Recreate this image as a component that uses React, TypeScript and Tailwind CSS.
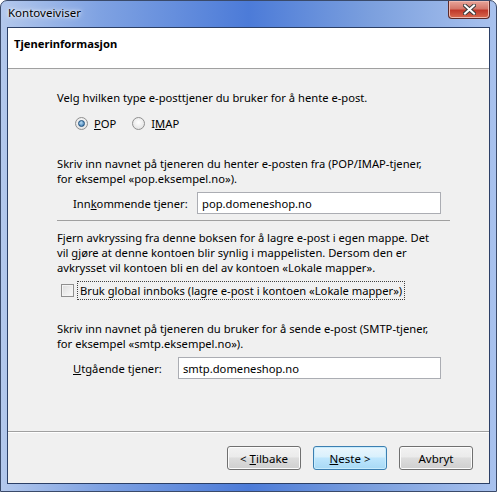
const font = "font-['Noto_Sans','Open_Sans',sans-serif]";

function Radio({ checked }: { checked?: boolean }) {
  return (
    <span className="flex h-[13px] w-[13px] items-center justify-center rounded-full border border-[#8f8f8f] bg-[radial-gradient(circle_at_50%_40%,#ffffff,#dcdcdc)]">
      {checked && (
        <span className="h-[7px] w-[7px] rounded-full border border-[#1b4d7a] bg-[radial-gradient(circle_at_40%_35%,#b7dcf5,#2a6aa6)]" />
      )}
    </span>
  );
}

function Button({ children, primary }: { children: React.ReactNode; primary?: boolean }) {
  return (
    <div
      className={`flex h-[24px] w-[74px] items-center justify-center rounded-[3px] border text-[11.5px] text-black ${
        primary
          ? "border-[#3c7fb1] bg-[linear-gradient(#eaf6fd_0%,#d9f0fc_45%,#bee6fd_50%,#a7d9f5_100%)] shadow-[inset_0_0_0_1px_#c8ecfd]"
          : "border-[#707070] bg-[linear-gradient(#f2f2f2_0%,#ebebeb_45%,#dddddd_50%,#cfcfcf_100%)] shadow-[inset_0_0_0_1px_#fcfcfc]"
      }`}
    >
      {children}
    </div>
  );
}

export default function App() {
  return (
    <div className={`${font} h-[492px] w-[497px] overflow-hidden bg-white`}>
      <div className="relative flex h-[492px] w-[497px] flex-col rounded-t-[7px] border border-[#3a4a6a] bg-[linear-gradient(90deg,#b3c8ec_0%,#7fa2e2_20%,#4c7bd8_50%,#7ca0de_75%,#a9c2ee_100%)]">
        {/* title bar */}
        <div className="flex h-[26px] shrink-0 items-start">
          <span className="ml-[7px] mt-[4px] text-[11.5px] leading-[16px] text-black [text-shadow:0_0_6px_#ffffff,0_0_3px_#ffffff]">
            Kontoveiviser
          </span>
          <div className="ml-auto mr-[6px] flex h-[18px] w-[42px] items-center justify-center rounded-b-[4px] border border-t-0 border-[#5a2a2a] bg-[linear-gradient(#e8a59a_0%,#d4776a_45%,#c0392b_55%,#d86a50_100%)] shadow-[inset_0_0_0_1px_#f0b8ae]">
            <svg width="13" height="11" viewBox="0 0 13 11">
              <path d="M2 1.5 L11 9.5 M11 1.5 L2 9.5" stroke="#3b3b3b" strokeWidth="4" strokeLinecap="square" />
              <path d="M2 1.5 L11 9.5 M11 1.5 L2 9.5" stroke="#ffffff" strokeWidth="2" strokeLinecap="square" />
            </svg>
          </div>
        </div>

        {/* client area */}
        <div className="mx-[6px] flex h-[457px] flex-col border border-[#2b3f66] bg-[#f0f0f0] text-[11.2px] leading-[15px] text-black whitespace-nowrap">
          <div className="h-[41px] shrink-0 border-b border-[#a0a0a0] bg-white pl-[6px] pt-[8px]">
            <span className="text-[11.2px] font-bold">Tjenerinformasjon</span>
          </div>

          <div className="flex flex-1 flex-col pl-[49px] pr-[43px]">
            <p className="mt-[21px]">Velg hvilken type e-posttjener du bruker for å hente e-post.</p>

            <div className="mt-[11px] flex items-center pl-[18px]">
              <Radio checked />
              <span className="ml-[6px]">
                <u>P</u>OP
              </span>
              <span className="ml-[16px]">
                <Radio />
              </span>
              <span className="ml-[6px]">
                I<u>M</u>AP
              </span>
            </div>

            <p className="mt-[25px]">
              Skriv inn navnet på tjeneren du henter e-posten fra (POP/IMAP-tjener,
              <br />
              for eksempel «pop.eksempel.no»).
            </p>

            <div className="mt-[6px] flex items-center pl-[16px]">
              <span className="w-[124px]">
                Inn<u>k</u>ommende tjener:
              </span>
              <div className="flex h-[22px] w-[244px] items-center border border-[#abadb3] bg-white pl-[4px]">
                pop.domeneshop.no
              </div>
            </div>

            <div className="mr-[-4px] mt-[6px] h-px bg-[#a0a0a0]" />

            <p className="mt-[9px]">
              Fjern avkryssing fra denne boksen for å lagre e-post i egen mappe. Det
              <br />
              vil gjøre at denne kontoen blir synlig i mappelisten. Dersom den er
              <br />
              avkrysset vil kontoen bli en del av kontoen «Lokale mapper».
            </p>

            <div className="mt-[6px] flex items-center pl-[4px]">
              <span className="h-[13px] w-[13px] border border-[#8f8f8f] bg-[linear-gradient(135deg,#dcdcdc,#fbfbfb)] shadow-[inset_0_0_0_1px_#f4f4f4]" />
              <span className="ml-[3px] border border-dotted border-[#404040] px-[2px] py-[1px]">
                Bruk global innboks (lagre e-post i kontoen «Lokale mapper»)
              </span>
            </div>

            <p className="mt-[21px]">
              Skriv inn navnet på tjeneren du bruker for å sende e-post (SMTP-tjener,
              <br />
              for eksempel «smtp.eksempel.no»).
            </p>

            <div className="mt-[6px] flex items-center pl-[16px]">
              <span className="w-[105px]">
                <u>U</u>tgående tjener:
              </span>
              <div className="flex h-[22px] w-[263px] items-center border border-[#abadb3] bg-white pl-[4px]">
                smtp.domeneshop.no
              </div>
            </div>
          </div>

          <div className="h-[2px] shrink-0 border-t border-[#a0a0a0] bg-white" />
          <div className="flex h-[50px] shrink-0 items-start justify-end gap-[12px] pr-[16px] pt-[13px]">
            <Button>
              &lt; <u className="ml-[3px]">T</u>ilbake
            </Button>
            <Button primary>
              <u>N</u>este &gt;
            </Button>
            <Button>Avbryt</Button>
          </div>
        </div>
      </div>
    </div>
  );
}
